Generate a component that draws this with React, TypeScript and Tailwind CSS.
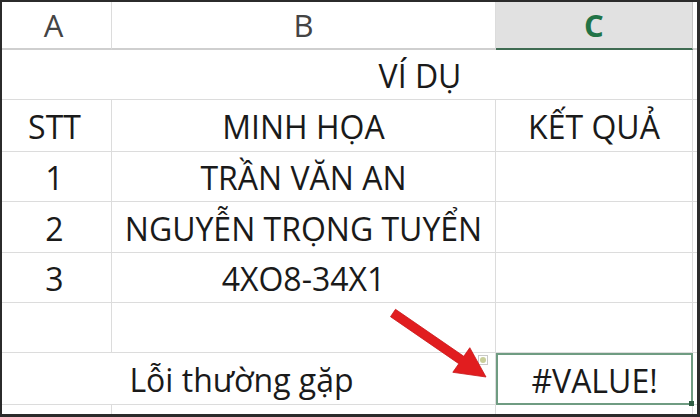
const line = "border-r border-b border-[#dcdcdc]";

const Cell = ({
  children,
  className = "",
}: {
  children?: React.ReactNode;
  className?: string;
}) => (
  <div className={`flex items-center justify-center ${line} ${className}`}>{children}</div>
);

const Row = ({ a, b, c }: { a?: string; b?: string; c?: string }) => (
  <>
    <Cell className="pt-[3px] pr-[4px]">{a}</Cell>
    <Cell className="pt-[3px]">{b}</Cell>
    <Cell className="pt-[3px]">{c}</Cell>
    <div className="border-b border-[#dcdcdc]" />
  </>
);

export default function App() {
  return (
    <div className="relative w-[700px] h-[417px] bg-[#2b2b2b] pt-[2px] pl-[2px] pr-[3px] pb-[3px] font-['Open_Sans',sans-serif]">
      <div className="grid h-full bg-white text-[32px] leading-none text-[#1a1a1a] grid-cols-[110px_384px_197px_4px] grid-rows-[48px_50px_52px_50px_51px_50px_50px_52px_9px]">
        {/* column headers */}
        <div className="flex items-center justify-center pr-[6px] border-r border-[#dcdcdc] border-b-2 border-b-[#cfcfcf] text-[31px] text-[#444]">A</div>
        <div className="flex items-center justify-center border-r border-[#dcdcdc] border-b-2 border-b-[#cfcfcf] text-[31px] text-[#444]">B</div>
        <div className="flex items-center justify-center border-r border-[#c4c4c4] border-b-2 border-b-[#3f6b52] bg-[#e1e1e1] text-[31px] font-bold text-[#217346]">C</div>
        <div className="border-b-2 border-b-[#cfcfcf]" />

        {/* merged title row */}
        <div className={`col-span-3 flex items-center justify-center pl-[146px] pt-[3px] ${line}`}>VÍ DỤ</div>
        <div className="border-b border-[#dcdcdc]" />

        <Row a="STT" b="MINH HỌA" c="KẾT QUẢ" />
        <Row a="1" b="TRẦN VĂN AN" />
        <Row a="2" b="NGUYỄN TRỌNG TUYỂN" />
        <Row a="3" b="4XO8-34X1" />
        <Row />

        {/* error row */}
        <div className={`col-span-2 flex items-center justify-center pr-[14px] pt-[3px] ${line}`}>Lỗi thường gặp</div>
        <div className="relative flex items-center justify-center border-2 border-[#6f9c82] pt-[3px]">
          #VALUE!
          <span className="absolute -right-[3px] -bottom-[3px] w-[5px] h-[5px] bg-[#2f5d43]" />
        </div>
        <div className="border-b border-[#dcdcdc]" />

        <div className="border-r border-[#dcdcdc]" />
        <div className="border-r border-[#dcdcdc]" />
        <div className="border-r border-[#dcdcdc]" />
        <div />
      </div>

      {/* error indicator */}
      <div className="absolute left-[478px] top-[355px] w-[10px] h-[10px] border border-[#c9c9c9] bg-white flex items-center justify-center">
        <span className="block w-[6px] h-[6px] rounded-full bg-[#c9cf9a]" />
      </div>

      {/* red arrow */}
      <svg className="absolute left-0 top-0 pointer-events-none" width="700" height="417" viewBox="0 0 700 417">
        <polygon
          points="395.5,309.3 463.8,356.3 469.8,347.7 486,377 452.8,372.3 458.8,363.7 390.5,316.7"
          fill="#e11d1f"
          stroke="#c8181a"
          strokeWidth="0.8"
          strokeLinejoin="round"
        />
      </svg>
    </div>
  );
}
